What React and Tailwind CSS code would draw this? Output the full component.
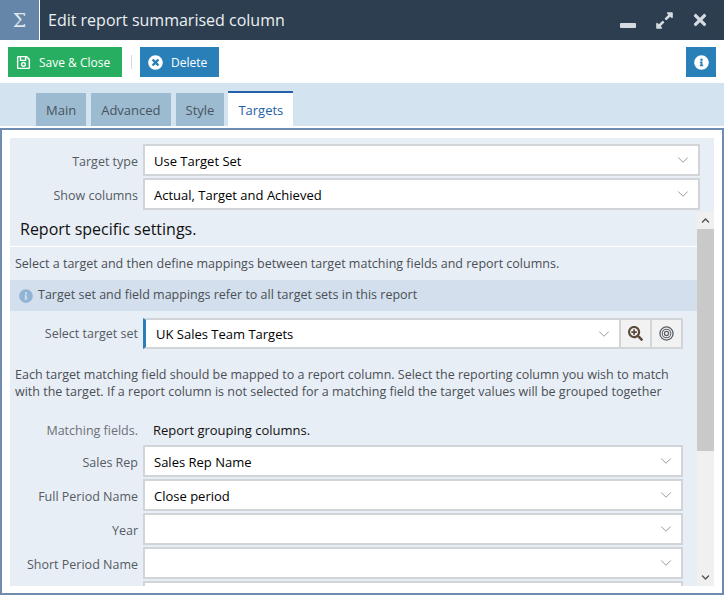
import { ChevronDown } from 'lucide-react';
import { FaInfoCircle, FaTimesCircle, FaExpandAlt, FaRegSave, FaSearchPlus, FaTimes, FaChevronUp, FaChevronDown } from 'react-icons/fa';

function Select({ value, className = 'w-[557px]' }) {
  return (
    <div className={`${className} h-8 shrink-0 bg-white border-2 border-[#d2d5d8] flex items-center justify-between pl-[9px] pr-[6px] text-[13px] text-black`}>
      <span className="pt-[4px]">{value}</span>
      <ChevronDown size={18} strokeWidth={1.2} className="text-[#8a8f96]" />
    </div>
  );
}

function Row({ label, value, className }) {
  return (
    <div className="flex items-center h-8 mb-[2px]">
      <label className="w-[133px] text-right pr-[5px] pt-[4px] text-[12.5px] text-[#555b62] shrink-0">{label}</label>
      <Select value={value} className={className} />
    </div>
  );
}

function TargetIcon() {
  return (
    <svg width="15" height="15" viewBox="0 0 16 16" fill="none" stroke="#5a5f66">
      <circle cx="8" cy="8" r="7" strokeWidth="1.4" />
      <circle cx="8" cy="8" r="4.6" strokeWidth="1.1" />
      <circle cx="8" cy="8" r="2.2" strokeWidth="1.3" />
    </svg>
  );
}

export default function App() {
  const tabs = ['Main', 'Advanced', 'Style'];
  const fields = [
    ['Sales Rep', 'Sales Rep Name'],
    ['Full Period Name', 'Close period'],
    ['Year', ''],
    ['Short Period Name', ''],
    ['', ''],
  ];

  return (
    <div className="w-[724px] h-[596px] bg-white overflow-hidden flex flex-col font-['Open_Sans',sans-serif]">
      {/* Title bar */}
      <div className="h-10 shrink-0 bg-[#2c3e50] flex items-center text-[#ecf0f1]">
        <div className="w-10 h-10 bg-[#6585a9] border-r border-white flex items-center justify-center text-[19px] font-['DejaVu_Serif',serif] text-[#dfe6ee]">Σ</div>
        <div className="ml-2 text-base">Edit report summarised column</div>
        <div className="ml-auto flex items-center text-[#d5dbe0]">
          <div className="w-4 h-[5px] rounded-[1px] bg-[#d5dbe0] mt-[11px] mr-[19px]"></div>
          <FaExpandAlt size={19} className="mr-[17px]" />
          <FaTimes size={18} className="mr-[15px]" />
        </div>
      </div>

      {/* Toolbar */}
      <div className="h-[43px] shrink-0 bg-white flex items-center pl-2 pr-2 pt-px">
        <button className="w-[114px] h-[30px] bg-[#27ae60] text-white text-xs flex items-center pl-2">
          <FaRegSave size={15} className="mr-2" />
          <span className="pt-px">Save & Close</span>
        </button>
        <div className="w-px h-[14px] bg-[#d8d8d8] ml-[9px] mr-2"></div>
        <button className="w-[79px] h-[30px] bg-[#2980b9] text-white text-xs flex items-center pl-2">
          <FaTimesCircle size={15} className="mr-2" />
          <span className="pt-px">Delete</span>
        </button>
        <button className="ml-auto w-[30px] h-[30px] bg-[#2980b9] text-white flex items-center justify-center">
          <FaInfoCircle size={15} />
        </button>
      </div>

      {/* Tabs */}
      <div className="h-[43px] shrink-0 bg-[#d3e4f0] flex items-end pl-9 gap-[5px] text-[13px]">
        {tabs.map((t) => (
          <div key={t} className="h-[33px] px-[10px] pt-[2px] bg-[#9dbbd0] text-[#47535f] flex items-center">{t}</div>
        ))}
        <div className="h-[35px] px-[10px] pt-[2px] -ml-[1px] bg-white border-t-2 border-[#2361a8] text-[#2361a8] flex items-center">Targets</div>
      </div>

      {/* Content */}
      <div className="h-[467px] shrink-0 mt-[2px] bg-white border-2 border-[#6e8cb0] px-2 pt-2 pb-[7px]">
        <div className="h-full w-[704px] bg-[#e8eef6] flex flex-col overflow-hidden pt-[6px]">
          <Row label="Target type" value="Use Target Set" />
          <Row label="Show columns" value="Actual, Target and Achieved" />

          <div className="flex flex-1 min-h-0">
            <div className="w-[687px] overflow-hidden">
              <div className="h-[35px] border-b border-white flex items-center pl-[10px] text-base text-[#111]">Report specific settings.</div>
              <div className="h-[33px] flex items-center pl-[5px] pt-[2px] text-[12.5px] text-[#4a4f55]">Select a target and then define mappings between target matching fields and report columns.</div>
              <div className="h-[31px] bg-[#d3dfed] flex items-center pl-[9px] text-[12.5px] text-[#4a4f55]">
                <FaInfoCircle size={14} className="mr-[5px] text-[#8fb4d6]" />
                Target set and field mappings refer to all target sets in this report
              </div>
              <div className="flex items-center h-[31px] mt-[7px]">
                <label className="w-[133px] text-right pr-[5px] pt-[2px] text-[12.5px] text-[#555b62] shrink-0">Select target set</label>
                <div className="w-[478px] h-[31px] bg-white border-2 border-l-[3px] border-[#d2d5d8] border-l-[#2980b9] flex items-center justify-between pl-[10px] pr-[6px] text-[13px] text-black">
                  <span className="pt-[2px]">UK Sales Team Targets</span>
                  <ChevronDown size={18} strokeWidth={1.2} className="text-[#8a8f96]" />
                </div>
                <div className="w-[31px] h-[31px] bg-[#f2f2f2] border-2 border-l-0 border-[#d2d5d8] flex items-center justify-center text-[#5a4a3a]">
                  <FaSearchPlus size={15} />
                </div>
                <div className="w-[31px] h-[31px] bg-[#f2f2f2] border-2 border-l-0 border-[#d2d5d8] flex items-center justify-center">
                  <TargetIcon />
                </div>
              </div>
              <p className="mt-[17px] pl-[5px] text-[12.5px] leading-[17px] text-[#4a4f55] w-[680px]">
                Each target matching field should be mapped to a report column. Select the reporting column you wish to match with the target. If a report column is not selected for a matching field the target values will be grouped together
              </p>
              <div className="flex items-center h-[18px] mt-[22px] mb-[5px]">
                <label className="w-[133px] text-right text-[12.5px] text-[#6b7077] pr-[5px] shrink-0">Matching fields.</label>
                <span className="pl-[10px] text-[13px] text-[#111]">Report grouping columns.</span>
              </div>
              {fields.map(([label, value], i) => (
                <Row key={i} label={label} value={value} className="w-[540px]" />
              ))}
            </div>

            {/* Scrollbar */}
            <div className="w-[17px] shrink-0 bg-[#f0f0f0] flex flex-col">
              <div className="h-[17px] flex items-center justify-center text-[#555]"><FaChevronUp size={9} /></div>
              <div className="h-[222px] bg-[#c9c9c9]"></div>
              <div className="flex-1"></div>
              <div className="h-[17px] flex items-center justify-center text-[#555]"><FaChevronDown size={9} /></div>
            </div>
          </div>
        </div>
      </div>
    </div>
  );
}
